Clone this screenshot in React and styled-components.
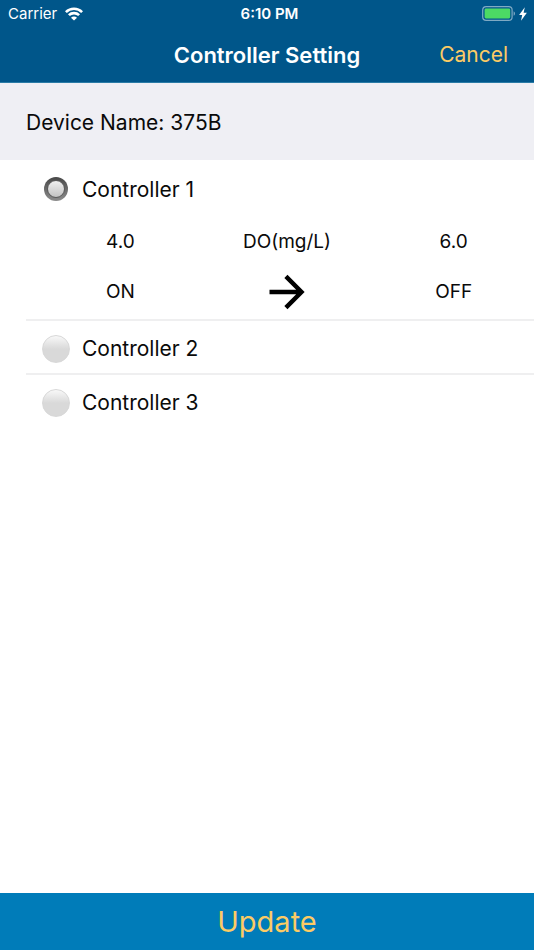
import React, { useState } from 'react';
import styled, { createGlobalStyle } from 'styled-components';

const GlobalStyle = createGlobalStyle`
  * {
    box-sizing: border-box;
  }

  body {
    margin: 0;
    background: #fff;
    color: #0a0a0a;
    font-family: Inter, 'Liberation Sans', sans-serif;
    font-size: 21px;
  }

  button {
    border: none;
    padding: 0;
    font-family: inherit;
    color: #fccb65;
    cursor: pointer;
  }
`;

// Styled Components
const Screen = styled.div`
  display: flex;
  flex-direction: column;
  min-height: 100vh;
`;

const Header = styled.header`
  background-color: #00568a;
  color: #fff;
  border-bottom: 1px solid #2a7ba6;
`;

const StatusBar = styled.div`
  display: grid;
  grid-template-columns: 1fr auto 1fr;
  align-items: center;
  height: 27px;
  padding: 0 7px 0 8px;
  font-size: 15px;
`;

const StatusGroup = styled.div`
  display: flex;
  align-items: center;
  justify-content: ${(props) => (props.$end ? 'flex-end' : 'flex-start')};
  gap: ${(props) => (props.$end ? '3px' : '8px')};
`;

const Time = styled.span`
  padding-left: 4px;
  font-weight: 600;
`;

const NavBar = styled.div`
  display: grid;
  grid-template-columns: 1fr auto 1fr;
  align-items: center;
  height: 55px;
  padding: 0 26px;
`;

const Title = styled.h1`
  grid-column: 2;
  margin: 0;
  font-size: 22px;
  font-weight: 600;
`;

const CancelButton = styled.button`
  justify-self: end;
  background: none;
  font-size: 21px;
`;

const DeviceName = styled.h2`
  margin: 0;
  padding: 27px 26px 25px;
  background-color: #efeff4;
  font-size: 21px;
  font-weight: 400;
  line-height: 25px;
`;

const Controllers = styled.ul`
  flex: 1;
  margin: 0;
  padding: 0 0 0 26px;
  list-style: none;
`;

const Controller = styled.li`
  & + & {
    border-top: 2px solid #efeff0;
  }
`;

const ControllerLabel = styled.label`
  display: flex;
  align-items: center;
  gap: 12px;
  height: ${(props) => (props.$open ? '58px' : '52px')};
  padding: ${(props) => (props.$open ? '0' : '3px')} 0 0 16px;
  cursor: pointer;
`;

const Radio = styled.input`
  appearance: none;
  flex: none;
  width: 28px;
  height: 28px;
  margin: 0;
  border: 1px solid #d8d8d8;
  border-radius: 50%;
  background: linear-gradient(#f8f8f8, #d9d9d9 50%, #d9d9d9);

  &:checked {
    display: grid;
    place-items: center;
    width: 24px;
    height: 24px;
    margin: 0 2px;
    border: none;
    background: linear-gradient(#484848, #8c8c8c);
  }

  &:checked::before {
    content: '';
    width: 16px;
    height: 16px;
    border: 1px solid #5a5a5a;
    border-radius: 50%;
    background: linear-gradient(#f0f0f0, #c2c2c2);
  }
`;

const Range = styled.div`
  display: grid;
  grid-template-columns: repeat(3, 1fr);
  column-gap: 20px;
  align-items: center;
  justify-items: center;
  padding: 0 7px 0 21px;
  font-size: 19px;
`;

const RangeCell = styled.div`
  display: flex;
  align-items: center;
  height: ${(props) => (props.$tall ? '55px' : '46px')};
`;

const UpdateButton = styled.button`
  height: 57px;
  background-color: #007cb9;
  font-size: 29px;
`;

const WifiIcon = () => (
  <svg width="18" height="14" viewBox="0 0 18 14" fill="none" stroke="#fff" strokeWidth="2.6" aria-hidden="true">
    <path d="M.9 5.1C5.4.7 12.6.7 17.1 5.1" />
    <path d="M3.9 8.2c2.8-2.8 7.4-2.8 10.2 0" />
    <path d="M9 13.6 6 10.7c1.6-1.6 4.4-1.6 6 0z" fill="#fff" stroke="none" />
  </svg>
);

const BatteryIcon = () => (
  <svg width="34" height="15" viewBox="0 0 34 15" aria-hidden="true">
    <rect x=".7" y=".7" width="29.4" height="13.6" rx="3.4" fill="none" stroke="#7faac4" strokeWidth="1.2" />
    <rect x="2.6" y="2.6" width="25.6" height="9.8" rx="1.4" fill="#4cd964" />
    <path d="M31.6 5.2c1.9.8 1.9 3.8 0 4.6z" fill="#7faac4" />
  </svg>
);

const BoltIcon = () => (
  <svg width="8" height="14" viewBox="0 0 8 14" fill="#fff" aria-hidden="true">
    <path d="M5.8.3.1 7.9h3.1L2 13.7l5.9-8H4.6z" />
  </svg>
);

const ArrowIcon = () => (
  <svg width="36" height="36" viewBox="0 0 36 36" fill="none" stroke="#000" strokeWidth="4.4" aria-hidden="true">
    <path d="M.5 18h31M16.9 2.4 32.5 18 16.9 33.6" />
  </svg>
);

const controllers = [
  { id: 1, name: 'Controller 1', unit: 'DO(mg/L)', on: '4.0', off: '6.0' },
  { id: 2, name: 'Controller 2', unit: 'DO(mg/L)', on: '4.0', off: '6.0' },
  { id: 3, name: 'Controller 3', unit: 'DO(mg/L)', on: '4.0', off: '6.0' },
];

const App = () => {
  const [selected, setSelected] = useState(1);

  return (
    <Screen>
      <GlobalStyle />
      <Header>
        <StatusBar>
          <StatusGroup>
            <span>Carrier</span>
            <WifiIcon />
          </StatusGroup>
          <Time>6:10 PM</Time>
          <StatusGroup $end>
            <BatteryIcon />
            <BoltIcon />
          </StatusGroup>
        </StatusBar>
        <NavBar>
          <Title>Controller Setting</Title>
          <CancelButton type="button">Cancel</CancelButton>
        </NavBar>
      </Header>

      <DeviceName>Device Name: 375B</DeviceName>

      <Controllers>
        {controllers.map((item) => (
          <Controller key={item.id}>
            <ControllerLabel $open={item.id === selected}>
              <Radio
                type="radio"
                name="controller"
                checked={item.id === selected}
                onChange={() => setSelected(item.id)}
              />
              {item.name}
            </ControllerLabel>
            {item.id === selected && (
              <Range>
                <RangeCell>{item.on}</RangeCell>
                <RangeCell>{item.unit}</RangeCell>
                <RangeCell>{item.off}</RangeCell>
                <RangeCell $tall>ON</RangeCell>
                <RangeCell $tall>
                  <ArrowIcon />
                </RangeCell>
                <RangeCell $tall>OFF</RangeCell>
              </Range>
            )}
          </Controller>
        ))}
      </Controllers>

      <UpdateButton type="button">Update</UpdateButton>
    </Screen>
  );
};

export default App;
